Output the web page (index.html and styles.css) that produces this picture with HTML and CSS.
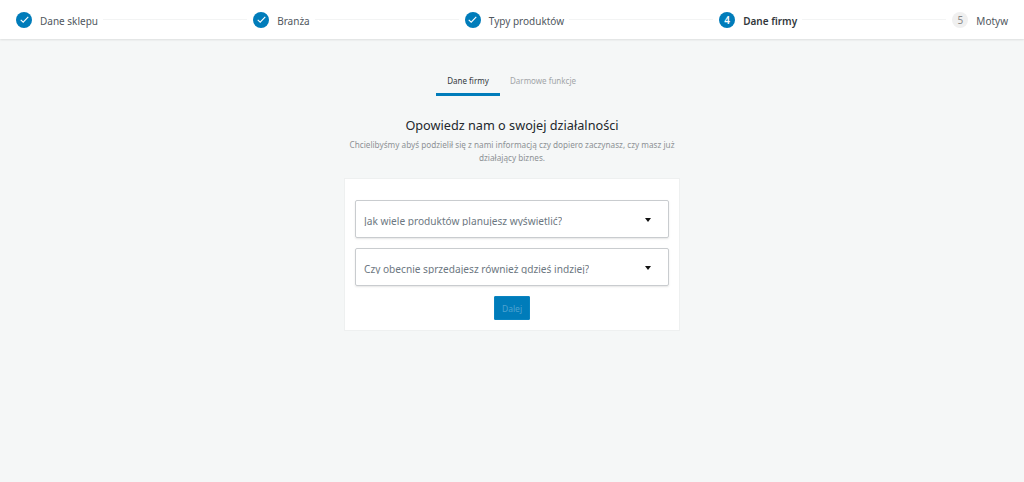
FILE: index.html
```html
<!DOCTYPE html>
<html lang="pl">
<head>
<meta charset="utf-8">
<title>Dane firmy</title>
<link rel="stylesheet" href="styles.css">
</head>
<body>
<header class="stepper">
  <div class="step done"><span class="dot"><svg viewBox="0 0 16 16" width="11" height="11"><path d="M2.5 8.5l3.6 3.4 7.4-7.6" fill="none" stroke="#fff" stroke-width="1.6"/></svg></span><span class="label">Dane sklepu</span></div>
  <div class="line"></div>
  <div class="step done"><span class="dot"><svg viewBox="0 0 16 16" width="11" height="11"><path d="M2.5 8.5l3.6 3.4 7.4-7.6" fill="none" stroke="#fff" stroke-width="1.6"/></svg></span><span class="label">Branża</span></div>
  <div class="line"></div>
  <div class="step done"><span class="dot"><svg viewBox="0 0 16 16" width="11" height="11"><path d="M2.5 8.5l3.6 3.4 7.4-7.6" fill="none" stroke="#fff" stroke-width="1.6"/></svg></span><span class="label">Typy produktów</span></div>
  <div class="line"></div>
  <div class="step current"><span class="dot">4</span><span class="label">Dane firmy</span></div>
  <div class="line"></div>
  <div class="step todo"><span class="dot">5</span><span class="label">Motyw</span></div>
</header>
<main class="content">
  <nav class="tabs">
    <div class="tab active">Dane firmy</div>
    <div class="tab">Darmowe funkcje</div>
  </nav>
  <h1 class="title">Opowiedz nam o swojej działalności</h1>
  <p class="subtitle">Chcielibyśmy abyś podzielił się z nami informacją czy dopiero zaczynasz, czy masz już działający biznes.</p>
  <section class="card">
    <div class="select"><span class="select-text">Jak wiele produktów planujesz wyświetlić?</span><span class="arrow"></span></div>
    <div class="select"><span class="select-text">Czy obecnie sprzedajesz również gdzieś indziej?</span><span class="arrow"></span></div>
    <button class="next" type="button">Dalej</button>
  </section>
</main>
</body>
</html>
```
FILE: styles.css
```css
* { box-sizing: border-box; }
html, body { margin: 0; height: 100%; }
body {
  background: #f5f7f7;
  font-family: "Noto Sans", "Open Sans", sans-serif;
  color: #32373c;
  height: 482px;
  overflow: hidden;
}
.stepper {
  height: 39px;
  background: #fff;
  box-shadow: 0 1px 2px rgba(0,0,0,.1);
  display: flex;
  align-items: center;
  padding: 0 16px;
}
.step { display: flex; align-items: center; flex: none; }
.dot {
  width: 16px; height: 16px;
  border-radius: 50%;
  background: #007cba;
  color: #fff;
  font-size: 10px;
  font-weight: 600;
  display: flex; align-items: center; justify-content: center;
  margin-right: 8px;
}
.label { font-size: 10px; color: #50575e; line-height: 16px; position: relative; top: 1px; }
.current .label { font-weight: 600; color: #32373c; }
.todo .dot { background: #f0f0f0; color: #888; font-weight: 400; }
.line { flex: 1; height: 1px; background: #f3f4f4; margin: 0 6px 0 5px; }
.content { display: flex; flex-direction: column; align-items: center; }
.tabs { display: flex; margin: 33px 0 0 -1px; }
.tab {
  font-size: 8px;
  color: #a2a5a8;
  line-height: 12px;
  height: 24px;
  padding: 3px 11px 0 10px;
}
.tab.active { color: #32373c; border-bottom: 3px solid #007cba; width: 64px; text-align: center; padding: 3px 0 0; }
.title { font-size: 12.7px; line-height: 20px; font-weight: 400; color: #23282d; margin: 19px 0 0; }
.subtitle { font-size: 8.2px; line-height: 13px; color: #8d9195; width: 340px; text-align: center; margin: 3px 0 0; }
.card {
  width: 336px; height: 153px;
  margin: 14px 0 0;
  background: #fff;
  border: 1px solid #eef0f0;
  padding: 21px 10px 0;
  display: flex; flex-direction: column; align-items: center;
}
.select {
  width: 100%;
  height: 37.5px;
  flex: none;
  border: 1px solid #c9cccf;
  border-radius: 2px;
  box-shadow: 0 1px 2px rgba(0,0,0,.1);
  display: flex;
  align-items: flex-start;
  justify-content: space-between;
  padding: 0 17px 0 8px;
  margin-bottom: 10.5px;
}
.select-text { font-size: 10.15px; line-height: 15px; color: #6c7781; margin-top: 13px; height: 12px; overflow: hidden; }
.arrow { width: 0; height: 0; border: 3px solid transparent; border-top: 4px solid #111; border-bottom: 0; margin-top: 17px; }
.next {
  width: 36px; height: 24px;
  background: #007cba;
  border: 1px solid #0a84c1;
  border-radius: 1px;
  color: #4ea3d1;
  font: 8.5px "Noto Sans", "Open Sans", sans-serif;
  padding: 0;
}
```
